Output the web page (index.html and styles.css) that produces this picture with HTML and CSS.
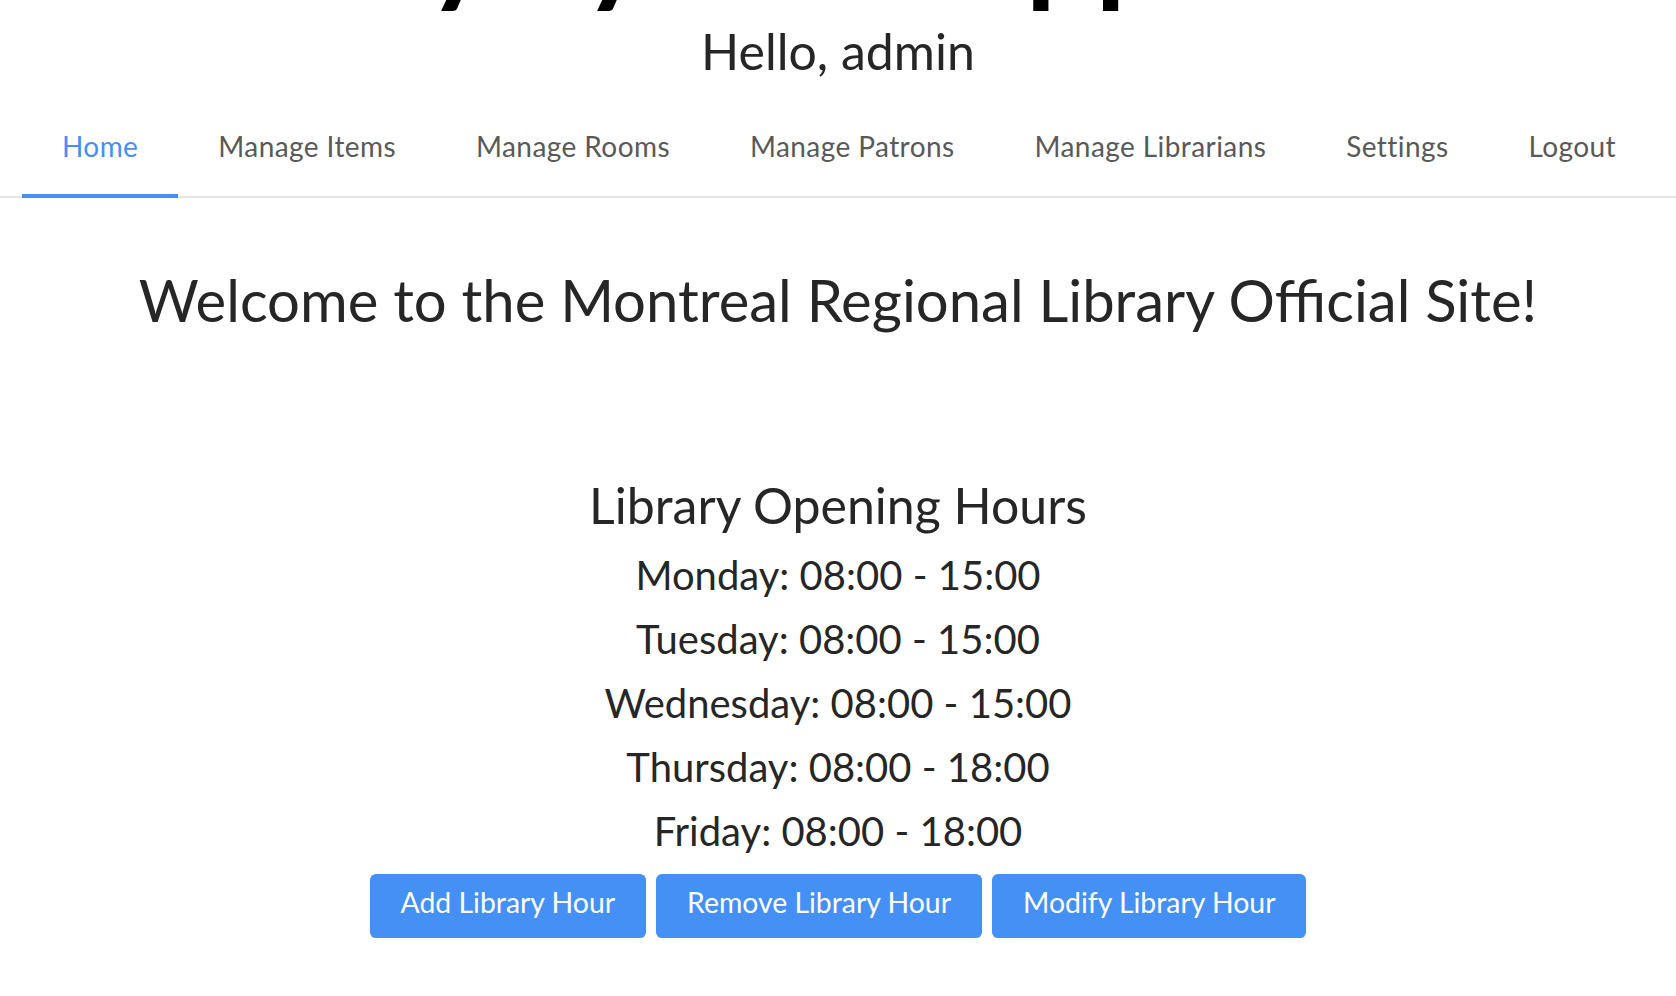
FILE: index.html
```html
<!DOCTYPE html>
<html lang="en">
<head>
<meta charset="utf-8">
<title>Montreal Regional Library</title>
<link rel="stylesheet" href="styles.css">
</head>
<body>
<header class="header">
  <div class="title-row">
    <h1 class="app-title">Library System Application</h1>
  </div>
  <p class="greeting">Hello, admin</p>
  <nav class="tabs">
    <a class="tab active" href="#">Home</a>
    <a class="tab" href="#">Manage Items</a>
    <a class="tab" href="#">Manage Rooms</a>
    <a class="tab" href="#">Manage Patrons</a>
    <a class="tab" href="#">Manage Librarians</a>
    <a class="tab" href="#">Settings</a>
    <a class="tab" href="#">Logout</a>
  </nav>
</header>
<main class="content">
  <h2 class="welcome">Welcome to the Montreal Regional Library Official Site!</h2>
  <section class="hours">
    <h3 class="hours-title">Library Opening Hours</h3>
    <ul class="hours-list">
      <li>Monday: 08:00 - 15:00</li>
      <li>Tuesday: 08:00 - 15:00</li>
      <li>Wednesday: 08:00 - 15:00</li>
      <li>Thursday: 08:00 - 18:00</li>
      <li>Friday: 08:00 - 18:00</li>
    </ul>
    <div class="actions">
      <button class="btn" type="button">Add Library Hour</button>
      <button class="btn" type="button">Remove Library Hour</button>
      <button class="btn" type="button">Modify Library Hour</button>
    </div>
  </section>
</main>
</body>
</html>
```

FILE: styles.css
```css
* {
  box-sizing: border-box;
}

html, body {
  margin: 0;
  padding: 0;
  background: #ffffff;
}

body {
  font-family: Lato, "Noto Sans", "DejaVu Sans", sans-serif;
  color: #262626;
  overflow: hidden;
}

.header {
  display: flex;
  flex-direction: column;
}

.title-row {
  display: flex;
  justify-content: center;
  margin-top: -118px;
}

.app-title {
  margin: 0;
  font-size: 123px;
  line-height: 122px;
  font-weight: 700;
  color: #000000;
  white-space: nowrap;
}

.greeting {
  margin: 17px 0 0;
  font-size: 50px;
  line-height: 60px;
  text-align: center;
  color: #262626;
}

.tabs {
  display: flex;
  margin-top: 19px;
  padding-left: 22px;
  border-bottom: 2px solid #e6e6e6;
}

.tab {
  display: block;
  padding: 32px 40px 34px;
  margin-bottom: -2px;
  font-size: 28px;
  line-height: 28px;
  letter-spacing: 0.42px;
  color: #595959;
  text-decoration: none;
  border-bottom: 4px solid transparent;
  white-space: nowrap;
}

.tab.active {
  color: #4590f5;
  border-bottom-color: #4590f5;
}

.content {
  display: flex;
  flex-direction: column;
  align-items: center;
  text-align: center;
}

.welcome {
  margin: 68px 0 0;
  font-size: 58px;
  line-height: 68px;
  font-weight: 400;
  color: #262626;
}

.hours {
  display: flex;
  flex-direction: column;
  align-items: center;
}

.hours-title {
  margin: 141px 0 0;
  font-size: 50px;
  line-height: 60px;
  font-weight: 400;
  color: #262626;
}

.hours-list {
  list-style: none;
  margin: 8px 0 0;
  padding: 0;
}

.hours-list li {
  font-size: 40px;
  line-height: 64px;
  color: #262626;
}

.actions {
  display: flex;
  gap: 10px;
  margin-top: 11px;
}

.btn {
  height: 64px;
  padding: 14px 31px 21px;
  border: none;
  border-radius: 6px;
  background: #4590f5;
  color: #ffffff;
  font-family: Lato, "Noto Sans", "DejaVu Sans", sans-serif;
  font-size: 28.4px;
  line-height: 29px;
  font-weight: 400;
  box-shadow: 0 3px 1px -2px rgba(0, 0, 0, 0.12), 0 2px 3px 0 rgba(0, 0, 0, 0.08);
  cursor: pointer;
}
```
